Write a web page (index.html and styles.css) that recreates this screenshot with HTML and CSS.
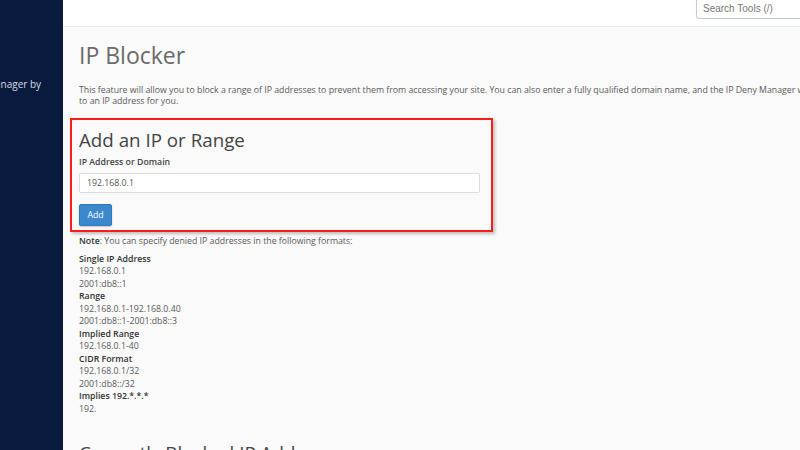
FILE: index.html
```html
<!DOCTYPE html>
<html>
<head>
<meta charset="utf-8">
<link rel="stylesheet" href="styles.css">
</head>
<body>
<div class="app">
  <aside class="sidebar">
    <div class="side-item">Manager by</div>
  </aside>
  <div class="main">
    <header class="topbar">
      <div class="search">Search Tools (/)</div>
    </header>
    <section class="content">
      <h1 class="title">IP Blocker</h1>
      <p class="intro">This feature will allow you to block a range of IP addresses to prevent them from accessing your site. You can also enter a fully qualified domain name, and the IP Deny Manager will attempt to resolve it to an IP address for you.</p>
      <div class="addbox">
        <h2 class="sub">Add an IP or Range</h2>
        <label class="lbl">IP Address or Domain</label>
        <div class="input">192.168.0.1</div>
        <button class="btn">Add</button>
      </div>
      <p class="note"><b>Note</b>: You can specify denied IP addresses in the following formats:</p>
      <dl class="formats">
        <dt>Single IP Address</dt>
        <dd>192.168.0.1</dd>
        <dd>2001:db8::1</dd>
        <dt>Range</dt>
        <dd>192.168.0.1-192.168.0.40</dd>
        <dd>2001:db8::1-2001:db8::3</dd>
        <dt>Implied Range</dt>
        <dd>192.168.0.1-40</dd>
        <dt>CIDR Format</dt>
        <dd>192.168.0.1/32</dd>
        <dd>2001:db8::/32</dd>
        <dt>Implies 192.*.*.*</dt>
        <dd>192.</dd>
      </dl>
      <h2 class="sub current">Currently Blocked IP Addresses</h2>
    </section>
  </div>
</div>
</body>
</html>
```
FILE: styles.css
```css
html, body {
  margin: 0;
  padding: 0;
  height: 100%;
  overflow: hidden;
}
body {
  font-family: "Open Sans", "Liberation Sans", sans-serif;
  color: #595959;
  background: #fafafa;
}
.app {
  display: flex;
  height: 450px;
}
.sidebar {
  width: 63px;
  flex: none;
  background: #0a1a3f;
  overflow: hidden;
}
.side-item {
  margin-top: 77px;
  margin-left: -14px;
  white-space: nowrap;
  color: #d6dae3;
  font-size: 10px;
  line-height: 14px;
}
.main {
  flex: 1;
  display: flex;
  flex-direction: column;
  min-width: 0;
  overflow: hidden;
}
.topbar {
  height: 27px;
  background: #fff;
  border-bottom: 1px solid #ececec;
  box-sizing: border-box;
  display: flex;
  justify-content: flex-end;
  flex: none;
}
.search {
  margin-right: -20px;
  width: 124px;
  height: 19px;
  box-sizing: border-box;
  border: 1px solid #c4ccd6;
  border-top: none;
  border-radius: 0 0 0 3px;
  font-family: "Liberation Sans", Arial, sans-serif;
  font-size: 10px;
  line-height: 18px;
  color: #777;
  padding-left: 6px;
}
.content {
  padding-left: 16px;
  white-space: nowrap;
}
.title {
  margin: 13px 0 0;
  font-weight: 400;
  font-size: 23px;
  line-height: 30px;
  color: #6a6a6a;
}
.intro {
  margin: 15px 0 0;
  font-size: 8.75px;
  line-height: 11px;
  white-space: normal;
  width: 823px;
}
.addbox {
  margin: 11px 0 0 -9px;
  width: 423px;
  height: 114px;
  box-sizing: border-box;
  border: 2px solid #ff1a1a;
  box-shadow: 2px 2px 3px rgba(0,0,0,0.25);
  padding: 7px 0 0 7px;
  display: flex;
  flex-direction: column;
  align-items: flex-start;
}
.sub {
  margin: 0;
  font-weight: 400;
  font-size: 18.75px;
  line-height: 26px;
  color: #444;
}
.lbl {
  margin-top: 4px;
  font-size: 8.75px;
  line-height: 11px;
  font-weight: 600;
  color: #444;
}
.input {
  margin-top: 5px;
  width: 401px;
  height: 20px;
  box-sizing: border-box;
  background: #fff;
  border: 1px solid #dcdcdc;
  border-radius: 2px;
  font-size: 8.75px;
  line-height: 18px;
  padding-left: 7px;
  color: #555;
}
.btn {
  margin-top: 11px;
  width: 33px;
  height: 22px;
  border: 1px solid #2f79b9;
  border-radius: 2px;
  background: #3b88cc;
  color: #fff;
  font-family: "Open Sans", sans-serif;
  font-size: 8.75px;
  padding: 0;
  box-shadow: 0 1px 2px rgba(0,0,0,0.2);
}
.note {
  margin: 3px 0 0;
  font-size: 8.75px;
  line-height: 12.5px;
}
.note b {
  font-weight: 600;
  color: #333;
}
.formats {
  margin: 5px 0 0;
  font-size: 8.75px;
  line-height: 12.5px;
}
.formats dt {
  font-weight: 600;
  color: #333;
}
.formats dd {
  margin: 0;
}
.current {
  margin-top: 25px;
  color: #444;
}
```
